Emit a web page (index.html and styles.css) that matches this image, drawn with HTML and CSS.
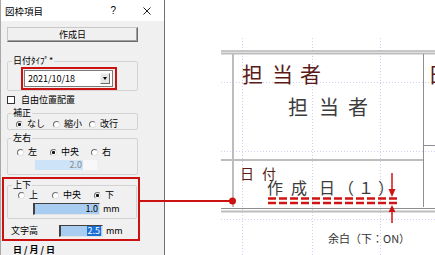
FILE: index.html
```html
<!DOCTYPE html>
<html lang="ja">
<head>
    <meta charset="UTF-8">
    <title>図枠項目</title>
    <link rel="stylesheet" href="styles.css">
</head>
<body>
    <div class="dialog">
        <div class="titlebar">
            <span class="title">図枠項目</span>
            <span class="help">?</span>
            <svg class="close" width="8" height="8" viewBox="0 0 8 8">
                <path d="M0.5 0.5 L7.5 7.5 M7.5 0.5 L0.5 7.5" stroke="#222" stroke-width="1"/>
            </svg>
        </div>

        <div class="dialog-body">
            <button class="btn">作成日</button>

            <fieldset class="group group-type">
                <legend>日付ﾀｲﾌﾟ*</legend>
                <div class="mark mark-combo">
                    <div class="combo">
                        <span class="combo-text">2021/10/18</span>
                        <span class="drop"></span>
                    </div>
                </div>
            </fieldset>

            <label class="check"><span class="box"></span>自由位置配置</label>

            <fieldset class="group">
                <legend>補正</legend>
                <div class="radios radios-fix">
                    <span class="radio"><span class="dot on"></span>なし</span>
                    <span class="radio"><span class="dot"></span>縮小</span>
                    <span class="radio"><span class="dot"></span>改行</span>
                </div>
            </fieldset>

            <fieldset class="group group-lr">
                <legend>左右</legend>
                <div class="radios radios-lr">
                    <span class="radio"><span class="dot"></span>左</span>
                    <span class="radio"><span class="dot on"></span>中央</span>
                    <span class="radio"><span class="dot"></span>右</span>
                </div>
                <div class="field field-lr">
                    <span class="num num-off">2.0</span>
                    <span class="unit-off"></span>
                </div>
            </fieldset>

            <div class="mark mark-group">
                <fieldset class="group group-ud">
                    <legend>上下</legend>
                    <div class="radios radios-ud">
                        <span class="radio"><span class="dot"></span>上</span>
                        <span class="radio"><span class="dot"></span>中央</span>
                        <span class="radio"><span class="dot on"></span>下</span>
                    </div>
                    <div class="field field-ud">
                        <span class="num num-ud">1.0</span>
                        <span class="unit">mm</span>
                    </div>
                </fieldset>
                <div class="field field-height">
                    <span class="field-label">文字高</span>
                    <span class="num num-height"><span class="selected">2.5</span></span>
                    <span class="unit">mm</span>
                </div>
            </div>

            <div class="cut-row">日/月/日</div>
        </div>
    </div>

    <svg class="sheet" width="270" height="255" viewBox="165 0 270 255">
        <g class="grid">
            <line x1="242.5" y1="38" x2="242.5" y2="255"/>
            <line x1="312.5" y1="38" x2="312.5" y2="255"/>
            <line x1="380.5" y1="38" x2="380.5" y2="255"/>
            <line x1="221" y1="82.5" x2="435" y2="82.5"/>
            <line x1="221" y1="151.5" x2="435" y2="151.5"/>
            <line x1="221" y1="219.5" x2="435" y2="219.5"/>
        </g>
        <g class="frame">
            <line class="thin" x1="221" y1="51" x2="435" y2="51"/>
            <line class="thick" x1="221" y1="53.5" x2="435" y2="53.5"/>
            <line class="thick" x1="233" y1="54" x2="233" y2="207"/>
            <line class="thin" x1="423.5" y1="54" x2="423.5" y2="207"/>
            <line class="thin" x1="423.5" y1="145.5" x2="435" y2="145.5"/>
            <line class="thick" x1="221" y1="160" x2="423" y2="160"/>
            <line class="thin" x1="221" y1="208.5" x2="435" y2="208.5"/>
            <line class="thick" x1="221" y1="211.5" x2="435" y2="211.5"/>
        </g>

        <text class="head" x="242 272 300" y="82" font-size="21">担当者</text>
        <text class="head" x="428" y="82" font-size="21">日</text>
        <text class="value" x="288 319 348" y="115" font-size="20">担当者</text>
        <text class="head" x="240 262" y="179" font-size="14">日付</text>
        <text class="value" x="267 291 319 338 358 378" y="194" font-size="16">作成日（１）</text>

        <g class="margin-mark">
            <line class="dash" x1="268" y1="198.5" x2="399" y2="198.5"/>
            <line class="dash" x1="268" y1="203" x2="399" y2="203"/>
            <line class="shaft" x1="392" y1="173" x2="392" y2="190"/>
            <polygon points="388.5,189 395.5,189 392,197"/>
            <line class="shaft" x1="392" y1="211" x2="392" y2="223"/>
            <polygon points="388.5,212 395.5,212 392,205"/>
        </g>

        <text class="note" x="328" y="243">余白（下：ON）</text>
    </svg>

    <svg class="callout" width="435" height="255">
        <line x1="139" y1="201" x2="232" y2="201"/>
        <circle cx="232.5" cy="201" r="3.5"/>
    </svg>
</body>
</html>
```

FILE: styles.css
```css
* {
    box-sizing: border-box;
}

body {
    margin: 0;
    width: 435px;
    height: 255px;
    overflow: hidden;
    display: flex;
    position: relative;
    background-color: #fff;
    font-family: "Noto Sans CJK JP", sans-serif;
}

/* dialog */

.dialog {
    width: 165px;
    height: 255px;
    flex: none;
    background-color: #f0f0f0;
    border-left: 1px solid #a8a8a8;
    border-right: 1px solid #707070;
    font-size: 9px;
    line-height: 10px;
    color: #000;
}

.titlebar {
    height: 21px;
    background-color: #fff;
    display: flex;
    align-items: center;
    padding-left: 4px;
}

.title {
    flex: 1;
    font-size: 9.5px;
}

.help {
    font-family: "Liberation Sans", sans-serif;
    font-size: 10px;
    margin-right: 27px;
}

.close {
    margin-right: 13px;
}

.dialog-body {
    padding: 6px 26px 0 6px;
}

.btn {
    display: block;
    width: 100%;
    height: 15px;
    margin: 0;
    padding: 0;
    font-family: inherit;
    font-size: 9px;
    line-height: 13px;
    color: #000;
    background-color: #f0f0f0;
    border: 1px solid;
    border-color: #c8c8c8 #6a6a6a #6a6a6a #c8c8c8;
    box-shadow: inset -1px -1px #a0a0a0;
}

.group {
    margin: 3px 0 0;
    padding: 0;
    min-width: 0;
    border: 1px solid #d3d3d3;
    border-radius: 2px;
}

.group legend {
    margin-left: 4px;
    padding: 0 1px;
    line-height: 10px;
}

.group-type {
    margin-top: 14px;
    padding-top: 1px;
}

.mark {
    border: 2px solid #cc1111;
}

.mark-combo {
    width: 96px;
    margin-left: 13px;
    padding: 1px 2px 1px 1px;
}

.combo {
    height: 17px;
    display: flex;
    align-items: center;
    background-color: #fff;
    border: 1px solid #7a7a7a;
    padding: 0 2px 0 3px;
}

.combo-text {
    flex: 1;
}

.drop {
    width: 10px;
    height: 11px;
    background-color: #e6e6e6;
    border: 1px solid;
    border-color: #f4f4f4 #6a6a6a #6a6a6a #f4f4f4;
    position: relative;
}

.drop::after {
    content: "";
    position: absolute;
    left: 2px;
    top: 3px;
    border-left: 2.5px solid transparent;
    border-right: 2.5px solid transparent;
    border-top: 3px solid #000;
}

.check {
    display: flex;
    align-items: center;
    height: 10px;
    margin-top: 4px;
}

.box {
    width: 8px;
    height: 8px;
    margin-right: 6px;
    background-color: #fff;
    border: 1px solid #333;
}

.radios {
    display: grid;
    height: 10px;
    align-items: center;
}

.radios-fix {
    padding: 0 0 0 8px;
    margin-top: 1px;
    grid-template-columns: 37px 36px auto;
}

.radios-lr {
    padding-left: 9px;
    margin-top: 4px;
    grid-template-columns: 33px 41px auto;
}

.radios-ud {
    height: 9px;
    padding-left: 10px;
    grid-template-columns: 34px 42px auto;
}

.radio {
    display: flex;
    align-items: center;
}

.dot {
    width: 7px;
    height: 7px;
    margin-right: 4px;
    border-radius: 50%;
    border: 1px solid;
    border-color: #6f6f6f #e2e2e2 #e2e2e2 #6f6f6f;
    background-color: #fff;
}

.dot.on {
    background: radial-gradient(circle, #111 1.3px, #fff 1.8px);
}

.field {
    display: flex;
    align-items: center;
}

.num {
    display: flex;
    justify-content: flex-end;
    align-items: center;
    padding-right: 1px;
}

.field-lr {
    height: 10px;
    margin: 3px 0 4px 27px;
}

.num-off {
    width: 48px;
    height: 10px;
    background-color: #cde3f7;
    color: #8a8a8a;
}

.unit-off {
    width: 14px;
    height: 10px;
    background-color: #f8f8f8;
}

.mark-group {
    width: 138px;
    margin: 2px 0 0 -5px;
    padding: 1px 1px 2px 3px;
}

.group-ud {
    margin-top: 0;
}

.field-ud {
    height: 12px;
    margin: 4px 0 3px 25px;
}

.num-ud,
.num-height {
    height: 12px;
    background-color: #a8cdf1;
    border-top: 1px solid #404040;
    border-left: 2px solid #404040;
    border-right: 1px solid #e4e4e4;
    border-bottom: 1px solid #e4e4e4;
}

.num-ud {
    width: 67px;
}

.unit {
    margin-left: 3px;
}

.field-height {
    height: 12px;
    margin-top: 6px;
}

.field-label {
    width: 48px;
    margin-left: 4px;
}

.num-height {
    width: 44px;
}

.selected {
    height: 10px;
    padding: 0 1px;
    line-height: 10px;
    background-color: #1a6fd6;
    color: #fff;
}

.cut-row {
    margin: 4px 0 0 6px;
    font-weight: bold;
    letter-spacing: 2px;
}

/* drawing */

.sheet {
    flex: none;
    display: block;
}

.grid line {
    stroke: #cfcff2;
    stroke-width: 1;
    stroke-dasharray: 1 2;
}

.frame .thin {
    stroke: #8e8e8e;
    stroke-width: 1;
}

.frame .thick {
    stroke: #bdbdbd;
    stroke-width: 2;
}

.head {
    fill: #5a1a16;
    font-family: "Noto Sans CJK JP", sans-serif;
}

.value {
    fill: #3c3c3c;
    font-family: "Noto Sans CJK JP", sans-serif;
}

.margin-mark line.dash {
    stroke: #d01414;
    stroke-width: 2.5;
    stroke-dasharray: 8 3;
}

.margin-mark line.shaft {
    stroke: #d01414;
    stroke-width: 1.5;
}

.margin-mark polygon {
    fill: #d01414;
}

.note {
    fill: #333;
    font-size: 11px;
    font-family: "Noto Sans CJK JP", sans-serif;
}

.callout {
    position: absolute;
    left: 0;
    top: 0;
    pointer-events: none;
}

.callout line {
    stroke: #cc1111;
    stroke-width: 2;
}

.callout circle {
    fill: #cc1111;
}
```
